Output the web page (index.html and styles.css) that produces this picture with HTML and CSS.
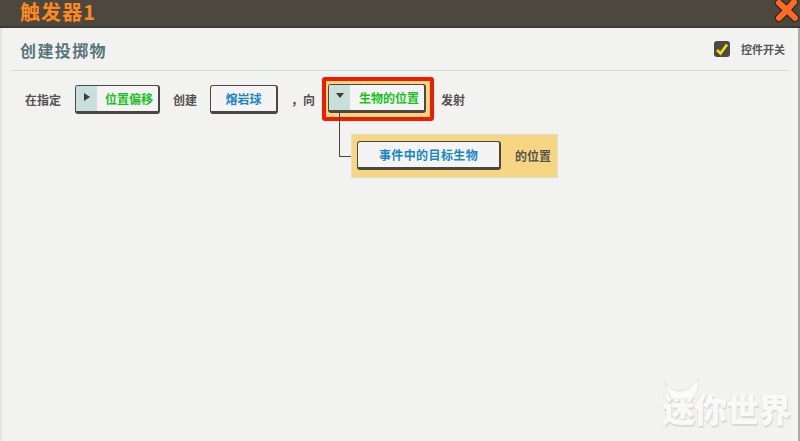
FILE: index.html
```html
<!DOCTYPE html>
<html lang="zh">
<head>
<meta charset="utf-8">
<title>触发器1</title>
<link rel="stylesheet" href="styles.css">
</head>
<body>
<div class="app">
  <header class="topbar">
    <h1 class="trigger-name">触发器1</h1>
    <svg class="close" viewBox="0 0 26 24" width="26" height="24" aria-label="关闭">
      <path d="M5 4 L13 11 L20 3 M21 19 L13 11 L5 19" fill="none" stroke="#33261d" stroke-width="8.5" stroke-linecap="round"/>
      <path d="M5 4 L13 11 L20 3 M21 19 L13 11 L5 19" fill="none" stroke="#ff6a22" stroke-width="6" stroke-linecap="round"/>
    </svg>
  </header>
  <main class="panel">
    <section class="heading">
      <h2 class="heading-title">创建投掷物</h2>
      <label class="toggle">
        <span class="checkbox">
          <svg viewBox="0 0 16 16" width="16" height="16"><path d="M3 9 L6.5 12.5 L13 3.5" fill="none" stroke="#ffdc00" stroke-width="2.6"/></svg>
        </span>
        <span class="toggle-label">控件开关</span>
      </label>
    </section>
    <section class="rule">
      <span class="word w-first">在指定</span>
      <button class="chip chip-expand chip-offset"><span class="handle"><i class="arrow-right"></i></span><span class="green">位置偏移</span></button>
      <span class="word w-create">创建</span>
      <button class="chip chip-lava"><span class="blue">熔岩球</span></button>
      <span class="word w-comma">，向</span>
      <span class="focus">
        <button class="chip chip-expand chip-target"><span class="handle"><i class="arrow-down"></i></span><span class="green">生物的位置</span></button>
      </span>
      <span class="word w-fire">发射</span>
    </section>
    <section class="branch">
      <span class="connector"></span>
      <div class="sub-block">
        <button class="chip chip-event"><span class="blue">事件中的目标生物</span></button>
        <span class="word w-pos">的位置</span>
      </div>
    </section>
    <div class="watermark">
      <svg class="horn" viewBox="0 0 40 20" width="40" height="20"><path d="M1 3 Q8 13 16 12 Q26 12 34 0 Q36 12 28 20 L8 20 Q2 12 1 3 Z" fill="#fbfbfa" stroke="#e2e2e0" stroke-width="1"/></svg>
      迷你世界
    </div>
  </main>
</div>
</body>
</html>
```

FILE: styles.css
```css
* { box-sizing: border-box; }
html, body { margin: 0; padding: 0; }
body {
  width: 800px;
  height: 441px;
  overflow: hidden;
  background: #f2f2f0;
  font-family: "Noto Sans CJK SC", "DejaVu Sans", sans-serif;
}
.app { display: flex; flex-direction: column; width: 800px; height: 441px; }
.topbar {
  flex: none;
  height: 28px;
  background: #4c4840;
  border-bottom: 2px solid #3c3933;
  display: flex;
  justify-content: space-between;
  align-items: center;
  padding: 0 0 0 20px;
}
.trigger-name {
  margin: -3px 0 0;
  font-size: 20px;
  line-height: 24px;
  font-weight: 700;
  letter-spacing: 1.1px;
  color: #ff8a1c;
}
.close { margin-top: -5px; }
.panel {
  position: relative;
  flex: 1;
  background: #f2f2f0;
  border-left: 2px solid #e4e6e4;
  border-right: 2px solid #a9aca8;
  padding: 0 10px;
}
.heading {
  height: 43px;
  border-bottom: 1px solid #c9dcd5;
  display: flex;
  justify-content: space-between;
  align-items: center;
  padding: 0 0 0 8px;
}
.heading-title {
  margin: 1px 0 0;
  font-size: 16px;
  font-weight: 700;
  letter-spacing: 1.4px;
  color: #5a767d;
}
.toggle { display: flex; align-items: center; gap: 11px; margin-right: 3px; }
.checkbox {
  width: 16px;
  height: 16px;
  border-radius: 3px;
  background: #4a4a48;
  display: block;
}
.checkbox svg { display: block; }
.toggle-label { font-size: 11px; font-weight: 700; color: #55555a; }
.rule { display: flex; align-items: center; height: 44px; margin-top: 6px; padding-left: 13px; }
.word { font-size: 12px; font-weight: 700; color: #55534f; white-space: nowrap; }
.w-create { margin-left: 13px; }
.w-comma { margin-left: 13px; }
.w-fire { margin-left: 7px; }
.w-pos { margin-left: 14px; }
.chip {
  display: flex;
  align-items: center;
  justify-content: center;
  height: 29px;
  padding: 0;
  border: 1px solid #4c4840;
  border-width: 1px 2px 3px 1px;
  border-radius: 3px;
  background: #f4f4f4;
  font-family: inherit;
  font-size: 12px;
  font-weight: 700;
  white-space: nowrap;
}
.chip-expand { justify-content: flex-start; }
.handle {
  display: flex;
  align-items: center;
  justify-content: center;
  width: 21px;
  height: 100%;
  background: #c8dfdb;
  border-radius: 2px 0 0 2px;
}
.chip-offset { width: 85px; margin-left: 14px; }
.chip-offset .green { margin-left: 8px; }
.chip-target { width: 98px; }
.chip-target .green { margin-left: 9px; }
.chip-lava { width: 68px; margin-left: 13px; }
.chip-event { width: 144px; letter-spacing: 0.4px; }
.arrow-right {
  display: block;
  border-left: 6px solid #3f3d38;
  border-top: 4.5px solid transparent;
  border-bottom: 4.5px solid transparent;
  margin-top: -2px;
}
.arrow-down {
  display: block;
  border-top: 5px solid #3f3d38;
  border-left: 4.5px solid transparent;
  border-right: 4.5px solid transparent;
  margin-top: -4px;
}
.green { color: #18c21e; }
.blue { color: #1a86c8; }
.focus {
  display: block;
  margin-left: 7px;
  padding: 3px 4px 4px 2px;
  background: #f6d683;
  border: 4px solid #f21a00;
  border-radius: 3px;
}
.branch { position: relative; margin: 13px 0 0 339px; }
.connector {
  position: absolute;
  left: -12px;
  top: -21px;
  width: 12px;
  height: 44px;
  border-left: 1px solid #4c4840;
  border-bottom: 1px solid #4c4840;
}
.sub-block {
  display: flex;
  align-items: center;
  width: 207px;
  height: 44px;
  padding: 0 0 1px 5px;
  background: #f6d683;
  border: 1px solid #e2e0cf;
}
.watermark {
  position: absolute;
  right: 8px;
  bottom: 16px;
  font-size: 33px;
  line-height: 34px;
  font-weight: 900;
  letter-spacing: -1px;
  color: #f9f9f8;
  text-shadow: 1px 2px 0 #dadad8, -1px 0 0 #e8e8e6;
}
.horn { position: absolute; left: 2px; top: -12px; }
```
